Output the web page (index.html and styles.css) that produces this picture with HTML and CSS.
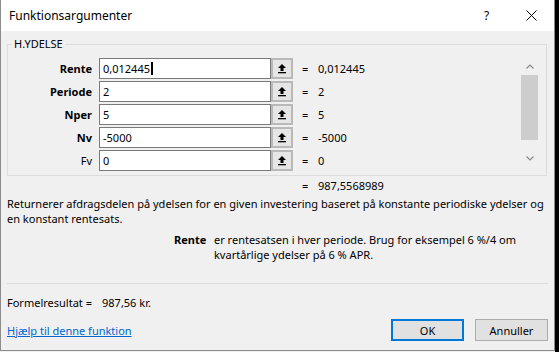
FILE: index.html
```html
<!DOCTYPE html>
<html>
	<head>
		<meta charset="utf-8" />
		<title>Funktionsargumenter</title>
		<link rel="stylesheet" href="styles.css">
	</head>
	<body>
		<div class="screen">
			<div class="dialog">
				<div class="titlebar">
					<span class="title">Funktionsargumenter</span>
					<span class="help">?</span>
					<svg class="close" width="11" height="11" viewBox="0 0 11 11"><path d="M0.5 0.5L10.5 10.5M10.5 0.5L0.5 10.5" stroke="#000" stroke-width="1" fill="none"/></svg>
				</div>
				<div class="content">
					<fieldset class="group">
						<legend>H.YDELSE</legend>
						<div class="args">
							<div class="rows">
								<div class="row">
									<span class="label bold">Rente</span>
									<span class="field">0,012445<i class="caret"></i></span>
									<span class="pick"><svg width="8" height="10" viewBox="0 0 8 10"><path d="M4 0L0 4H2.5V7H5.5V4H8Z" fill="#000"/><rect x="0" y="8" width="8" height="1.3" fill="#000"/></svg></span>
									<span class="eq">=</span>
									<span class="val">0,012445</span>
								</div>
								<div class="row">
									<span class="label bold">Periode</span>
									<span class="field">2</span>
									<span class="pick"><svg width="8" height="10" viewBox="0 0 8 10"><path d="M4 0L0 4H2.5V7H5.5V4H8Z" fill="#000"/><rect x="0" y="8" width="8" height="1.3" fill="#000"/></svg></span>
									<span class="eq">=</span>
									<span class="val">2</span>
								</div>
								<div class="row">
									<span class="label bold">Nper</span>
									<span class="field">5</span>
									<span class="pick"><svg width="8" height="10" viewBox="0 0 8 10"><path d="M4 0L0 4H2.5V7H5.5V4H8Z" fill="#000"/><rect x="0" y="8" width="8" height="1.3" fill="#000"/></svg></span>
									<span class="eq">=</span>
									<span class="val">5</span>
								</div>
								<div class="row">
									<span class="label bold">Nv</span>
									<span class="field">-5000</span>
									<span class="pick"><svg width="8" height="10" viewBox="0 0 8 10"><path d="M4 0L0 4H2.5V7H5.5V4H8Z" fill="#000"/><rect x="0" y="8" width="8" height="1.3" fill="#000"/></svg></span>
									<span class="eq">=</span>
									<span class="val">-5000</span>
								</div>
								<div class="row">
									<span class="label">Fv</span>
									<span class="field">0</span>
									<span class="pick"><svg width="8" height="10" viewBox="0 0 8 10"><path d="M4 0L0 4H2.5V7H5.5V4H8Z" fill="#000"/><rect x="0" y="8" width="8" height="1.3" fill="#000"/></svg></span>
									<span class="eq">=</span>
									<span class="val">0</span>
								</div>
							</div>
							<div class="scrollbar">
								<div class="sb-btn"><svg width="8" height="5" viewBox="0 0 8 5"><path d="M0.5 4.5L4 1L7.5 4.5" stroke="#8a8a8a" stroke-width="1.2" fill="none"/></svg></div>
								<div class="sb-thumb"></div>
								<div class="sb-track"></div>
								<div class="sb-btn"><svg width="8" height="5" viewBox="0 0 8 5"><path d="M0.5 0.5L4 4L7.5 0.5" stroke="#8a8a8a" stroke-width="1.2" fill="none"/></svg></div>
							</div>
						</div>
					</fieldset>
					<div class="result"><span class="eq">=</span>987,5568989</div>
					<p class="desc">Returnerer afdragsdelen på ydelsen for en given investering baseret på konstante periodiske ydelser og<br />en konstant rentesats.</p>
					<div class="argdesc">
						<span class="arg-name">Rente</span>
						<span class="arg-text">er rentesatsen i hver periode. Brug for eksempel 6 %/4 om<br />kvartårlige ydelser på 6 % APR.</span>
					</div>
					<div class="separator"></div>
					<div class="formula"><span class="formula-label">Formelresultat =</span>987,56 kr.</div>
					<div class="footer">
						<a class="helplink" href="#">Hjælp til denne funktion</a>
						<button class="btn btn-ok">OK</button>
						<button class="btn">Annuller</button>
					</div>
				</div>
			</div>
			<div class="edge"></div>
		</div>
	</body>
</html>
```

FILE: styles.css
```css
*{
	margin: 0;
	padding: 0;
	box-sizing: border-box;
}
body{
	background: #f0f0f0;
	font-family: "Noto Sans", "Liberation Sans", sans-serif;
	font-size: 11px;
	line-height: 15px;
	color: #000;
}
.screen{
	display: flex;
	width: 559px;
	height: 352px;
}
.edge{
	flex: 1;
	background: #000;
}
.dialog{
	width: 555px;
	height: 351px;
	border: 1px solid #8c8c8c;
	border-top: none;
	background: #f0f0f0;
	display: flex;
	flex-direction: column;
}
.titlebar{
	height: 31px;
	background: #fff;
	display: flex;
	align-items: center;
	padding-left: 8px;
}
.title{
	font-size: 12px;
}
.help{
	margin-left: auto;
	font-size: 12px;
	width: 8px;
}
.close{
	margin-left: 34px;
	margin-right: 17px;
}
.content{
	padding: 0 6px;
}
.group{
	margin-top: 5px;
	width: 540px;
	border: 1px solid #dcdcdc;
	padding: 6px 0 4px 0;
	min-width: 0;
}
.group legend{
	margin-left: 4px;
	padding: 0 2px;
	line-height: 16px;
}
.args{
	display: flex;
	align-items: flex-start;
}
.rows{
	flex: 1;
}
.row{
	display: flex;
	align-items: center;
	height: 21px;
}
.row + .row{
	margin-top: 2px;
}
.label{
	width: 84px;
	text-align: right;
	margin-right: 7px;
}
.bold{
	font-weight: bold;
}
.field{
	width: 172px;
	height: 21px;
	border: 1px solid #7a7a7a;
	background: #fff;
	padding-left: 3px;
	display: flex;
	align-items: center;
}
.caret{
	display: inline-block;
	width: 2px;
	height: 13px;
	background: #000;
	margin-left: 1px;
}
.pick{
	width: 22px;
	height: 21px;
	border: 2px solid #b9b9b9;
	background: #e6e6e6;
	display: flex;
	align-items: center;
	justify-content: center;
}
.pick svg{
	display: block;
}
.eq{
	display: inline-block;
	width: 16px;
}
.row .eq{
	margin-left: 9px;
}
.scrollbar{
	width: 17px;
	margin-right: 8px;
	display: flex;
	flex-direction: column;
}
.sb-btn{
	height: 17px;
	display: flex;
	align-items: center;
	justify-content: center;
}
.sb-thumb{
	height: 65px;
	background: #cdcdcd;
}
.sb-track{
	height: 10px;
}
.result{
	margin-top: 2px;
	padding-left: 295px;
}
.desc{
	margin-top: 3px;
}
.argdesc{
	display: flex;
	margin-top: 6px;
	padding-left: 167px;
}
.arg-name{
	width: 30px;
	text-align: right;
	margin-right: 10px;
	font-weight: bold;
}
.separator{
	margin-top: 21px;
	height: 1px;
	width: 541px;
	background: #dcdcdc;
}
.formula{
	margin-top: 11px;
}
.formula-label{
	display: inline-block;
	width: 95px;
}
.footer{
	display: flex;
	align-items: center;
	margin-top: 9px;
}
.helplink{
	color: #0066cc;
	text-decoration: underline;
	margin-right: auto;
}
.btn{
	width: 73px;
	height: 22px;
	border: 1px solid #adadad;
	background: #e1e1e1;
	font-family: inherit;
	font-size: 11px;
	color: #000;
}
.btn-ok{
	border: 2px solid #0078d7;
	margin-right: 11px;
}
```
